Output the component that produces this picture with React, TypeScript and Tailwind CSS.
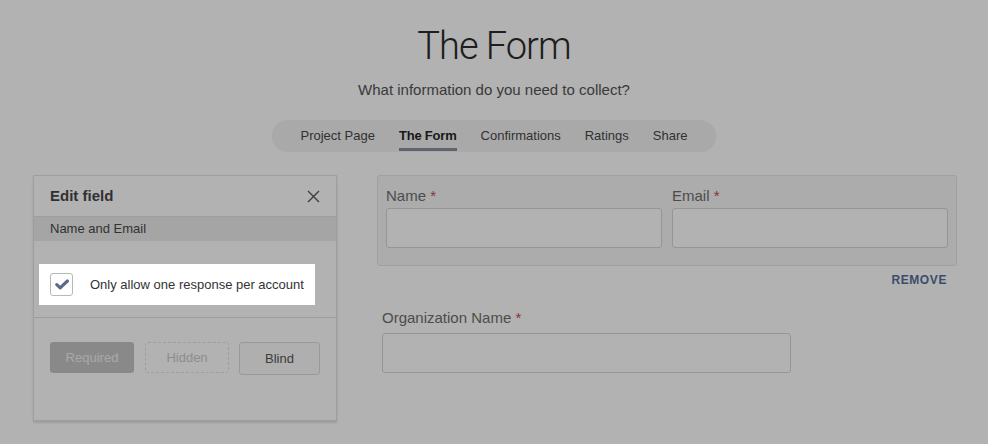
import React from 'react';

const tabs = ['Project Page', 'The Form', 'Confirmations', 'Ratings', 'Share'];

const FieldLabel: React.FC<{ text: string }> = ({ text }) => (
  <div className="mb-[2px] text-[15px] leading-[20px] text-[#6e6e6e]">
    {text} <span className="text-[#c44a4a]">*</span>
  </div>
);

const TextBox: React.FC<{ className?: string }> = ({ className = '' }) => (
  <div className={`h-[40px] rounded-[3px] border border-[#d6d6d6] bg-white ${className}`} />
);

export default function App() {
  return (
    <div className="relative min-h-screen overflow-hidden bg-white font-['Liberation_Sans',Arial,sans-serif] text-[#333]">
      <header className="flex flex-col items-center pt-[22px]">
        <h1 className="font-['Roboto',sans-serif] text-[38px] font-light leading-[48px] tracking-[-1px] text-[#2b2b2b]">
          The Form
        </h1>
        <p className="mt-[11px] text-[15px] leading-[18px] text-[#545454]">
          What information do you need to collect?
        </p>
        <nav className="mt-[21px] flex h-[31px] gap-[24px] rounded-full bg-[#f3f3f3] px-[28px] shadow-[0_1px_1px_rgba(0,0,0,0.06)]">
          {tabs.map(tab => (
            <div
              key={tab}
              className={`flex items-center border-y-[3px] border-t-transparent text-[13px] ${
                tab === 'The Form'
                  ? 'border-b-[#86909e] font-bold tracking-[-0.2px] text-[#262626]'
                  : 'border-b-transparent text-[#474747]'
              }`}
            >
              {tab}
            </div>
          ))}
        </nav>
      </header>

      <main className="mt-[24px] flex gap-[40px] pl-[33px] pr-[31px]">
        {/* edit field panel */}
        <section className="flex h-[246px] w-[304px] flex-col border border-[#e2e2e2] bg-white shadow-[0_2px_2px_rgba(0,0,0,0.12)]">
          <div className="flex h-[41px] items-center justify-between border-b border-[#e2e2e2] pl-[16px] pr-[16px]">
            <h2 className="text-[15px] font-bold text-[#474747]">Edit field</h2>
            <svg width="13" height="13" viewBox="0 0 13 13" className="text-[#555]">
              <path d="M1 1 L12 12 M12 1 L1 12" stroke="currentColor" strokeWidth="1.3" fill="none" />
            </svg>
          </div>
          <div className="flex h-[24px] items-center bg-[#ededed] px-[16px] text-[13px] text-[#484848]">
            Name and Email
          </div>
          <div className="border-b border-[#e2e2e2] pb-[12px] pl-[5px] pt-[23px]">
            <label className="relative z-20 inline-flex items-center gap-[17px] bg-white px-[11px] py-[9px]">
              <span className="flex h-[23px] w-[23px] items-center justify-center rounded-[3px] border border-[#b8b8b8] bg-white">
                <svg width="14" height="11" viewBox="0 0 14 11">
                  <path d="M1.8 5.6 L5.2 8.8 L12.4 2" stroke="#5b6a87" strokeWidth="3.2" fill="none" strokeLinecap="round" strokeLinejoin="round" />
                </svg>
              </span>
              <span className="text-[13px] text-[#333]">Only allow one response per account</span>
            </label>
          </div>
          <div className="flex items-start pl-[16px] pt-[24px] text-[13px]">
            <button className="h-[31px] w-[84px] rounded-[3px] bg-[#c5c5c5] text-[#f1f1f1]">Required</button>
            <button className="ml-[11px] h-[31px] w-[84px] rounded-[3px] border border-dashed border-[#e3e3e3] text-[#cbcbcb]">
              Hidden
            </button>
            <button className="ml-[10px] h-[33px] w-[81px] rounded-[3px] border border-[#dcdcdc] bg-[#fbfbfb] text-[#575757]">
              Blind
            </button>
          </div>
        </section>

        {/* form preview */}
        <section className="flex-1">
          <div className="rounded-[3px] border border-[#e5e5e5] bg-[#f7f7f7] px-[8px] pb-[17px] pt-[10px]">
            <div className="flex gap-[10px]">
              <div className="flex-1">
                <FieldLabel text="Name" />
                <TextBox />
              </div>
              <div className="flex-1">
                <FieldLabel text="Email" />
                <TextBox />
              </div>
            </div>
          </div>
          <div className="mt-[7px] flex justify-end pr-[10px]">
            <button className="text-[12px] font-bold leading-[14px] tracking-[0.6px] text-[#546f9a]">REMOVE</button>
          </div>
          <div className="mt-[21px] pl-[5px]">
            <div className="mb-[5px] text-[15px] leading-[20px] text-[#6e6e6e]">
              Organization Name <span className="text-[#c44a4a]">*</span>
            </div>
            <TextBox className="w-[409px]" />
          </div>
        </section>
      </main>

      <div className="absolute inset-0 z-10 bg-black/30" />
    </div>
  );
}
